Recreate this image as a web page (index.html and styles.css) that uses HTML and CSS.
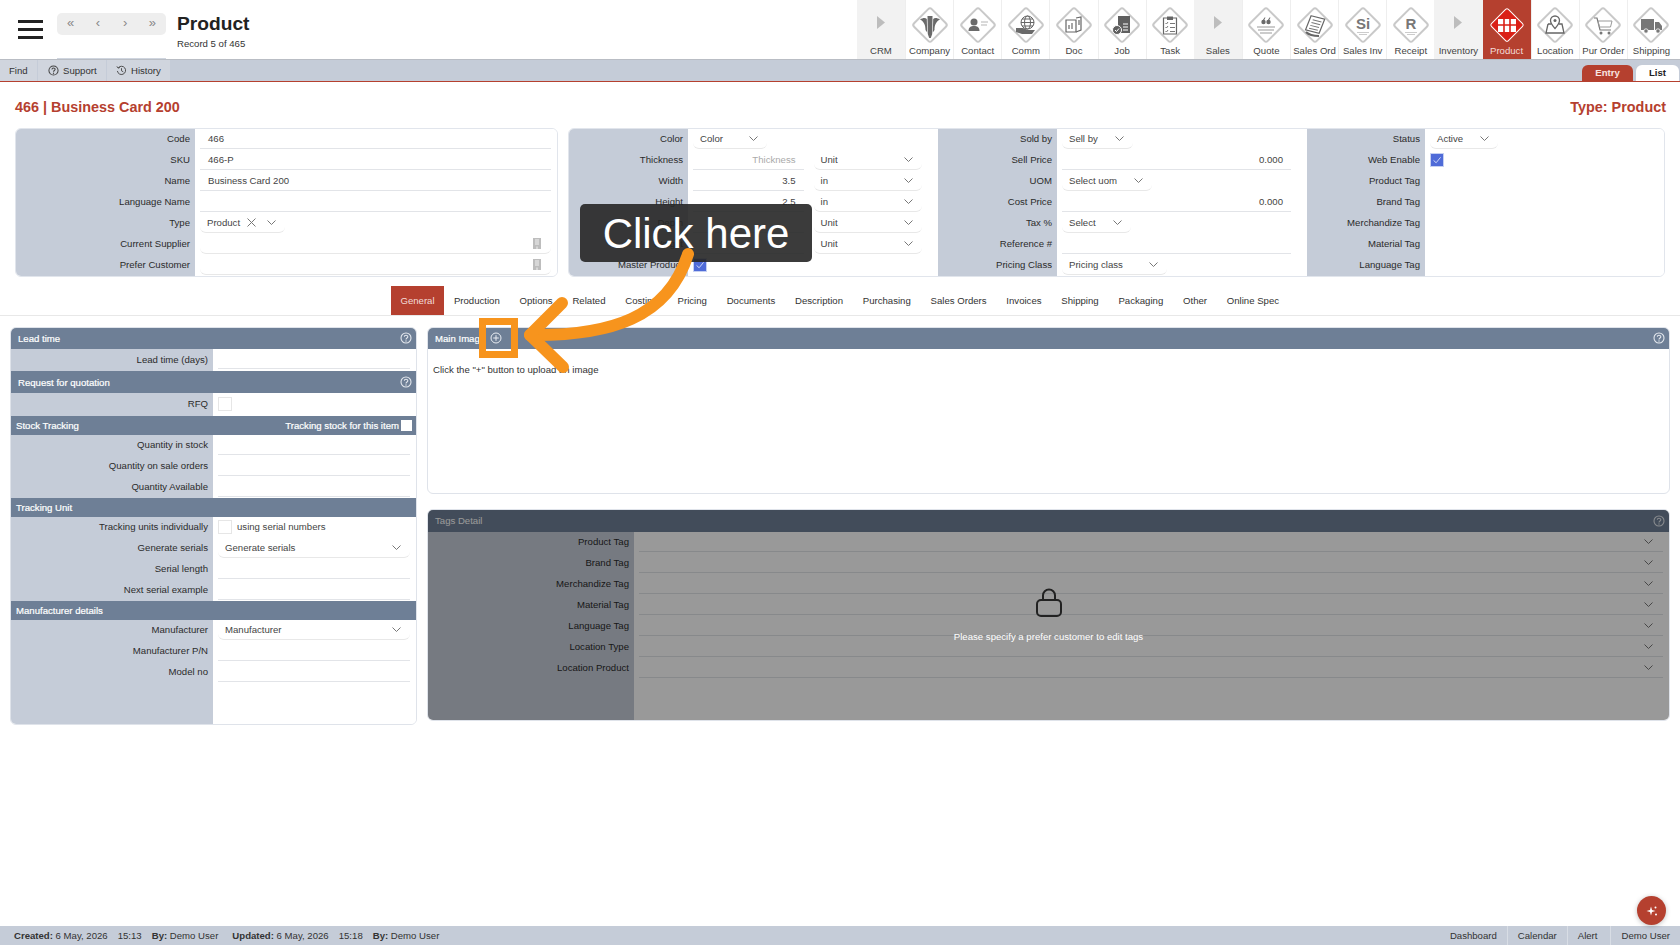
FILE: index.html
```html
<!DOCTYPE html>
<html lang="en">
<head>
  <meta charset="UTF-8">
  <title>Product</title>
  <link rel="stylesheet" href="styles.css">
</head>
<body>
  <!-- shared icons -->
  <svg class="defs" width="0" height="0">
    <symbol id="chev" viewBox="0 0 9 5"><path d="M.5.5 4.5 4.5 8.5.5" fill="none" stroke="#777" stroke-width="1"/></symbol>
    <symbol id="diamond" viewBox="0 0 40 40"><rect x="7.5" y="7.5" width="25" height="25" rx="2.5" transform="rotate(45 20 20)" fill="#fff" stroke="#c9c9c9" stroke-width="2"/></symbol>
    <symbol id="help" viewBox="0 0 12 12"><circle cx="6" cy="6" r="5" fill="none" stroke="currentColor" stroke-width="1.1"/><path d="M4.3 4.8C4.3 2.7 7.8 2.8 7.8 4.7 7.8 6 6 6 6 7.4" fill="none" stroke="currentColor" stroke-width="1.1"/><circle cx="6" cy="9" r=".7" fill="currentColor"/></symbol>
    <symbol id="tick" viewBox="0 0 14 14"><path d="M3 7.5 6 10.2 11.2 3.8" fill="none" stroke="#dfe6fb" stroke-width="1"/></symbol>
    <symbol id="lookup" viewBox="0 0 8 11"><path d="M0 0H8V11H0Z" fill="#bdbdbd"/><path d="M2 2H6M2 4H6M2 6H6M4 8.5V11" stroke="#fff" stroke-width=".8"/></symbol>
  </svg>

  <div class="page">
    <header class="top">
      <button class="burger"><i></i><i></i><i></i></button>
      <div class="nav-wrap">
        <div class="nav-pill"><span>«</span><span>‹</span><span>›</span><span>»</span></div>
      </div>
      <div class="page-title">
        <h1>Product</h1>
        <p>Record 5 of 465</p>
      </div>

      <nav class="tiles">
        <a class="tile group"><svg class="tri" viewBox="0 0 8 13"><path d="M0 0 8 6.5 0 13Z"/></svg><span>CRM</span></a>
        <a class="tile">
          <svg viewBox="0 0 40 40"><use href="#diamond"/><g fill="#6a6a6a"><path d="M17.5 11H22.5L22.2 29 20.8 33H19.2L17.8 29Z"/><path d="M10 14.5C13 12.5 15.5 12.5 16.8 14L17.2 27.5 15.5 25C15.5 20 14 16.5 10 14.5Z"/><path d="M30 14.5C27 12.5 24.5 12.5 23.2 14L22.8 27.5 24.5 25C24.5 20 26 16.5 30 14.5Z"/></g></svg>
          <span>Company</span>
        </a>
        <a class="tile">
          <svg viewBox="0 0 40 40"><use href="#diamond"/><g fill="#6a6a6a"><circle cx="16" cy="17" r="3.5"/><path d="M10.5 26C10.5 22 13 21 16 21S21.5 22 21.5 26Z"/></g><path d="M23 17H30M23 20H29" stroke="#b5b5b5"/></svg>
          <span>Contact</span>
        </a>
        <a class="tile">
          <svg viewBox="0 0 40 40"><use href="#diamond"/><g fill="none" stroke="#666"><circle cx="21.5" cy="17.5" r="6.5" fill="#fff"/><ellipse cx="21.5" cy="17.5" rx="3" ry="6.5"/><path d="M15 17.5H28M16 14H27M16 21H27"/></g><path d="M10 23H17L22 25H29L26 29H16L10 27Z" fill="#6a6a6a"/></svg>
          <span>Comm</span>
        </a>
        <a class="tile">
          <svg viewBox="0 0 40 40"><use href="#diamond"/><g fill="none" stroke="#666" stroke-width="1.2"><path d="M12 15H22V27H12Z"/><path d="M22 13 27 12V25L22 27"/></g><path d="M15 24V20M18 24V18M25 15V20" stroke="#888" stroke-width="1.5"/></svg>
          <span>Doc</span>
        </a>
        <a class="tile">
          <svg viewBox="0 0 40 40"><use href="#diamond"/><path d="M16 11H28V28H16Z" fill="#5f5f5f"/><path d="M21 19H26M21 22H26M21 25H26" stroke="#fff"/><circle cx="15" cy="25" r="4.5" fill="#5f5f5f" stroke="#fff"/><path d="M13 25 14.5 26.5 17 23.5" fill="none" stroke="#fff"/></svg>
          <span>Job</span>
        </a>
        <a class="tile">
          <svg viewBox="0 0 40 40"><use href="#diamond"/><path d="M13.5 13H26.5V29H13.5Z" fill="none" stroke="#666" stroke-width="1.2"/><path d="M17 11.5H23V15H17Z" fill="#666"/><path d="M15.5 18 16.5 19 18 17M15.5 22 16.5 23 18 21M15.5 26 16.5 27 18 25M20 18.5H25M20 22.5H25M20 26.5H25" fill="none" stroke="#777"/></svg>
          <span>Task</span>
        </a>
        <a class="tile group"><svg class="tri" viewBox="0 0 8 13"><path d="M0 0 8 6.5 0 13Z"/></svg><span>Sales</span></a>
        <a class="tile">
          <svg viewBox="0 0 40 40"><use href="#diamond"/><g fill="#6a6a6a"><circle cx="17.5" cy="17" r="2.2"/><circle cx="22.5" cy="17" r="2.2"/><path d="M16 16.5 18.5 12.5H19.5L17.5 16.5ZM21 16.5 23.5 12.5H24.5L22.5 16.5Z"/></g><path d="M11 22H29M12 25H28M14 28H26" stroke="#999"/></svg>
          <span>Quote</span>
        </a>
        <a class="tile">
          <svg viewBox="0 0 40 40"><use href="#diamond"/><g transform="rotate(14 20 20)"><path d="M14 12H28L26 27H12Z" fill="#fff" stroke="#666" stroke-width="1.2"/><path d="M16.5 15.5H25.5M16 18.5H25M15.5 21.5H24.5M15 24.5H24" stroke="#777"/></g><path d="M11 27C14 30 20 31 24 31" fill="none" stroke="#666" stroke-width="2"/></svg>
          <span>Sales Ord</span>
        </a>
        <a class="tile">
          <svg viewBox="0 0 40 40"><use href="#diamond"/><text class="glyph" x="20" y="24" text-anchor="middle">Si</text><path d="M14 27.5H26M16 29.5H24" stroke="#ccc"/></svg>
          <span>Sales Inv</span>
        </a>
        <a class="tile">
          <svg viewBox="0 0 40 40"><use href="#diamond"/><text class="glyph" x="20" y="24" text-anchor="middle">R</text><path d="M14 27.5H26M16 29.5H24" stroke="#ccc"/></svg>
          <span>Receipt</span>
        </a>
        <a class="tile group"><svg class="tri" viewBox="0 0 8 13"><path d="M0 0 8 6.5 0 13Z"/></svg><span>Inventory</span></a>
        <a class="tile active">
          <svg viewBox="0 0 40 40"><rect x="8" y="8" width="24" height="24" rx="2" transform="rotate(45 20 20)" fill="#da2016" stroke="#fff" stroke-width="1"/><path d="M11 14H29V27H11Z" fill="#fff"/><path d="M11 20H29M17 14V27M23 14V27" stroke="#da2016" stroke-width="1.6"/></svg>
          <span>Product</span>
        </a>
        <a class="tile">
          <svg viewBox="0 0 40 40"><use href="#diamond"/><path d="M13 19H16M24 19H27L29 28H11L13 19" fill="none" stroke="#666" stroke-width="1.3"/><path d="M20 11A4.5 4.5 0 0 1 24.5 15.5C24.5 18.5 20 23.5 20 23.5S15.5 18.5 15.5 15.5A4.5 4.5 0 0 1 20 11Z" fill="#fff" stroke="#666" stroke-width="1.3"/><circle cx="20" cy="15.5" r="1.5" fill="#666"/></svg>
          <span>Location</span>
        </a>
        <a class="tile">
          <svg viewBox="0 0 40 40"><use href="#diamond"/><path d="M11 13H14L17 25H28" fill="none" stroke="#777" stroke-width="1.2"/><path d="M15 16H29L27.5 22H16.5Z" fill="none" stroke="#999"/><circle cx="18" cy="28" r="1.5" fill="#777"/><circle cx="26" cy="28" r="1.5" fill="#777"/></svg>
          <span>Pur Order</span>
        </a>
        <a class="tile">
          <svg viewBox="0 0 40 40"><use href="#diamond"/><path d="M10 14H23V25H10ZM24 17H28L31 21V25H24Z" fill="#777"/><circle cx="15" cy="26" r="2.2" fill="#777" stroke="#fff" stroke-width=".8"/><circle cx="27" cy="26" r="2.2" fill="#777" stroke="#fff" stroke-width=".8"/></svg>
          <span>Shipping</span>
        </a>
      </nav>
    </header>

    <div class="bar">
      <a class="bar-item find">Find</a>
      <a class="bar-item support"><svg class="ico" viewBox="0 0 12 12"><use href="#help"/></svg>Support</a>
      <a class="bar-item history">
        <svg class="ico" viewBox="0 0 12 12"><path d="M2.5 3A4.5 4.5 0 1 1 1.5 6.5M1 1.5 2.3 3.4 4.3 2.7M6 3.5V6.3L8 7.5" fill="none" stroke="currentColor"/></svg>History
      </a>
      <div class="view-tabs">
        <a class="view-tab on">Entry</a>
        <a class="view-tab">List</a>
      </div>
    </div>

    <div class="head-row">
      <h2>466 | Business Card 200</h2>
      <h2>Type: Product</h2>
    </div>

    <!-- top forms -->
    <div class="forms">
      <section class="box box-main">
        <div class="col col-main">
          <div class="row"><label>Code</label><div class="fld"><div class="inp">466</div></div></div>
          <div class="row"><label>SKU</label><div class="fld"><div class="inp">466-P</div></div></div>
          <div class="row"><label>Name</label><div class="fld"><div class="inp">Business Card 200</div></div></div>
          <div class="row"><label>Language Name</label><div class="fld"><div class="inp"></div></div></div>
          <div class="row"><label>Type</label><div class="fld"><div class="sel w-type">Product<svg class="x" viewBox="0 0 9 9"><path d="M.5.5 8.5 8.5M8.5.5.5 8.5" stroke="#777"/></svg><svg class="chev"><use href="#chev"/></svg></div></div></div>
          <div class="row"><label>Current Supplier</label><div class="fld"><div class="sel grow">&nbsp;<svg class="lookup"><use href="#lookup"/></svg></div></div></div>
          <div class="row"><label>Prefer Customer</label><div class="fld"><div class="sel grow">&nbsp;<svg class="lookup"><use href="#lookup"/></svg></div></div></div>
        </div>
      </section>

      <section class="box box-attrs">
        <div class="col col-a">
          <div class="row"><label>Color</label><div class="fld"><div class="sel w-color">Color<svg class="chev"><use href="#chev"/></svg></div></div></div>
          <div class="row"><label>Thickness</label><div class="fld split"><div class="inp num ph">Thickness</div><div class="sel">Unit<svg class="chev"><use href="#chev"/></svg></div></div></div>
          <div class="row"><label>Width</label><div class="fld split"><div class="inp num">3.5</div><div class="sel">in<svg class="chev"><use href="#chev"/></svg></div></div></div>
          <div class="row"><label>Height</label><div class="fld split"><div class="inp num">2.5</div><div class="sel">in<svg class="chev"><use href="#chev"/></svg></div></div></div>
          <div class="row"><label>Depth</label><div class="fld split"><div class="inp num"></div><div class="sel">Unit<svg class="chev"><use href="#chev"/></svg></div></div></div>
          <div class="row"><label>Weight</label><div class="fld split"><div class="inp num"></div><div class="sel">Unit<svg class="chev"><use href="#chev"/></svg></div></div></div>
          <div class="row"><label>Master Product</label><div class="fld"><span class="check on"><svg><use href="#tick"/></svg></span></div></div>
        </div>
        <div class="col col-b">
          <div class="row"><label>Sold by</label><div class="fld"><div class="sel w-sold">Sell by<svg class="chev"><use href="#chev"/></svg></div></div></div>
          <div class="row"><label>Sell Price</label><div class="fld"><div class="inp num">0.000</div></div></div>
          <div class="row"><label>UOM</label><div class="fld"><div class="sel w-uom">Select uom<svg class="chev"><use href="#chev"/></svg></div></div></div>
          <div class="row"><label>Cost Price</label><div class="fld"><div class="inp num">0.000</div></div></div>
          <div class="row"><label>Tax %</label><div class="fld"><div class="sel w-tax">Select<svg class="chev"><use href="#chev"/></svg></div></div></div>
          <div class="row"><label>Reference #</label><div class="fld"><div class="inp"></div></div></div>
          <div class="row"><label>Pricing Class</label><div class="fld"><div class="sel w-class">Pricing class<svg class="chev"><use href="#chev"/></svg></div></div></div>
        </div>
        <div class="col col-c">
          <div class="row"><label>Status</label><div class="fld"><div class="sel w-status">Active<svg class="chev"><use href="#chev"/></svg></div></div></div>
          <div class="row"><label>Web Enable</label><div class="fld"><span class="check on"><svg><use href="#tick"/></svg></span></div></div>
          <div class="row"><label>Product Tag</label><div class="fld"></div></div>
          <div class="row"><label>Brand Tag</label><div class="fld"></div></div>
          <div class="row"><label>Merchandize Tag</label><div class="fld"></div></div>
          <div class="row"><label>Material Tag</label><div class="fld"></div></div>
          <div class="row"><label>Language Tag</label><div class="fld"></div></div>
        </div>
      </section>
    </div>

    <!-- tabs -->
    <nav class="tabs">
      <a class="tab on">General</a>
      <a class="tab">Production</a>
      <a class="tab">Options</a>
      <a class="tab">Related</a>
      <a class="tab">Costing</a>
      <a class="tab">Pricing</a>
      <a class="tab">Documents</a>
      <a class="tab">Description</a>
      <a class="tab">Purchasing</a>
      <a class="tab">Sales Orders</a>
      <a class="tab">Invoices</a>
      <a class="tab">Shipping</a>
      <a class="tab">Packaging</a>
      <a class="tab">Other</a>
      <a class="tab">Online Spec</a>
    </nav>

    <main class="panels">
      <section class="panel side">
        <div class="sec">Lead time<svg class="help"><use href="#help"/></svg></div>
        <div class="row tall"><label>Lead time (days)</label><div class="fld"><div class="inp"></div></div></div>
        <div class="sec sec-22">Request for quotation<svg class="help"><use href="#help"/></svg></div>
        <div class="row taller"><label>RFQ</label><div class="fld"><span class="check"></span></div></div>

        <div class="sec sub">Stock Tracking<span class="sec-right">Tracking stock for this item<i class="mini-check"></i></span></div>
        <div class="row"><label>Quantity in stock</label><div class="fld"><div class="inp"></div></div></div>
        <div class="row"><label>Quantity on sale orders</label><div class="fld"><div class="inp"></div></div></div>
        <div class="row"><label>Quantity Available</label><div class="fld"><div class="inp"></div></div></div>

        <div class="sec sub">Tracking Unit</div>
        <div class="row"><label>Tracking units individually</label><div class="fld"><span class="check"></span><span class="check-text">using serial numbers</span></div></div>
        <div class="row"><label>Generate serials</label><div class="fld"><div class="sel grow">Generate serials<svg class="chev"><use href="#chev"/></svg></div></div></div>
        <div class="row"><label>Serial length</label><div class="fld"><div class="inp"></div></div></div>
        <div class="row"><label>Next serial example</label><div class="fld"><div class="inp"></div></div></div>

        <div class="sec sub">Manufacturer details</div>
        <div class="row"><label>Manufacturer</label><div class="fld"><div class="sel grow">Manufacturer<svg class="chev"><use href="#chev"/></svg></div></div></div>
        <div class="row"><label>Manufacturer P/N</label><div class="fld"><div class="inp"></div></div></div>
        <div class="row"><label>Model no</label><div class="fld"><div class="inp"></div></div></div>
        <div class="row filler"><label></label><div class="fld"></div></div>
      </section>

      <div class="main-col">
        <section class="panel image-panel">
          <div class="sec">Main Image<svg class="plus" viewBox="0 0 12 12"><circle cx="6" cy="6" r="5" fill="none" stroke="#e8ecf2"/><path d="M6 3.2V8.8M3.2 6H8.8" stroke="#e8ecf2"/></svg><svg class="help"><use href="#help"/></svg></div>
          <p class="hint">Click the "+" button to upload an image</p>
        </section>

        <section class="panel tags-panel">
          <div class="sec">Tags Detail<svg class="help"><use href="#help"/></svg></div>
          <div class="row"><label>Product Tag</label><div class="fld"><div class="inp sel-line"><svg class="chev"><use href="#chev"/></svg></div></div></div>
          <div class="row"><label>Brand Tag</label><div class="fld"><div class="inp sel-line"><svg class="chev"><use href="#chev"/></svg></div></div></div>
          <div class="row"><label>Merchandize Tag</label><div class="fld"><div class="inp sel-line"><svg class="chev"><use href="#chev"/></svg></div></div></div>
          <div class="row"><label>Material Tag</label><div class="fld"><div class="inp sel-line"><svg class="chev"><use href="#chev"/></svg></div></div></div>
          <div class="row"><label>Language Tag</label><div class="fld"><div class="inp sel-line"><svg class="chev"><use href="#chev"/></svg></div></div></div>
          <div class="row"><label>Location Type</label><div class="fld"><div class="inp sel-line"><svg class="chev"><use href="#chev"/></svg></div></div></div>
          <div class="row"><label>Location Product</label><div class="fld"><div class="inp sel-line"><svg class="chev"><use href="#chev"/></svg></div></div></div>
          <div class="row filler"><label></label><div class="fld"></div></div>

          <div class="lock-layer">
            <svg class="lock" viewBox="0 0 26 29"><path d="M7 13V7.5A6 6 0 0 1 19 7.5V13" fill="none" stroke="#222" stroke-width="2"/><rect x="1" y="12" width="24" height="16" rx="4" fill="none" stroke="#222" stroke-width="2"/></svg>
            <p>Please specify a prefer customer to edit tags</p>
          </div>
        </section>
      </div>
    </main>

    <footer class="foot">
      <div class="meta">
        <span><b>Created:</b> 6 May, 2026</span><span>15:13</span><span class="end"><b>By:</b> Demo User</span>
        <span><b>Updated:</b> 6 May, 2026</span><span>15:18</span><span><b>By:</b> Demo User</span>
      </div>
      <div class="foot-links">
        <a>Dashboard</a><a>Calendar</a><a>Alert</a><a>Demo User</a>
      </div>
    </footer>
  </div>

  <button class="fab"><svg viewBox="0 0 14 14"><path d="M6 2.5 7 6 10.5 7 7 8 6 11.5 5 8 1.5 7 5 6Z" fill="#fff"/><circle cx="10.5" cy="3.5" r="1" fill="#fff"/><circle cx="11" cy="10.5" r="1" fill="#fff"/></svg></button>

  <!-- tutorial callout over the page -->
  <div class="callout">Click here</div>
  <svg class="annot" viewBox="0 0 1680 945">
    <rect x="482.5" y="321.5" width="32" height="33"/>
    <path d="M688 254C668 318 610 336 530 335"/>
    <path d="M562 303 530 335 563 367"/>
  </svg>
</body>
</html>
```

FILE: styles.css
```css
/* base */
* { margin: 0; padding: 0; box-sizing: border-box; }
html, body { height: 100%; overflow: hidden; }
body { font: 9.6px/1.2 "Liberation Sans", Arial, sans-serif; color: #333; background: #fff; position: relative; }
.defs { position: absolute; }
.page { height: 945px; display: flex; flex-direction: column; }
a { color: inherit; }
button { border: none; background: none; }

/* top header */
.top { height: 60px; display: flex; align-items: flex-start; border-bottom: 1px solid #b9bdc4; }
.burger { width: 25px; margin: 20px 0 0 18px; display: flex; flex-direction: column; gap: 5.5px; }
.burger i { display: block; height: 2.5px; background: #222; }
.nav-wrap { width: 109px; height: 46px; margin: 13px 0 0 14px; border-bottom: 1.5px solid #cfd5df; }
.nav-pill { height: 22px; background: #eee; border-radius: 5px; display: flex; }
.nav-pill span { width: 27.25px; text-align: center; line-height: 20px; font-size: 13px; color: #888; }
.page-title { margin: 12px 0 0 11px; }
.page-title h1 { font-size: 19.2px; line-height: 23px; color: #222; }
.page-title p { margin-top: 3px; line-height: 12px; color: #333; }

/* module tiles */
.tiles { margin-left: auto; margin-right: 5px; display: flex; height: 59px; }
.tile { width: 48.125px; height: 59px; border-left: 1px solid #eee; text-align: center; color: #444; padding-top: 5px; display: block; }
.tile svg { display: block; width: 40px; height: 40px; margin: 0 auto; }
.tile span { display: block; line-height: 11px; white-space: nowrap; }
.tile.group { background: #f2f2f2; border-left: none; }
.tile.group .tri { width: 8px; height: 13px; margin: 11px auto 16px; fill: #bdbdbd; }
.tile.active { background: #b5402f; color: #f3dcd8; border-left: none; }
.glyph { font-size: 15px; font-weight: 700; fill: #777; }

/* toolbar under header */
.bar { height: 22px; background: #c5ccd8; border-bottom: 1.5px solid #b5402f; display: flex; color: #333; }
.bar-item { display: flex; align-items: center; gap: 4px; height: 21px; background: #d0d5de; border-right: 1px solid #c5ccd8; }
.find { width: 38px; padding-left: 9px; }
.support { width: 69px; padding-left: 10px; }
.history { width: 64px; padding-left: 9px; }
.ico { width: 11px; height: 11px; color: #444; }
.view-tabs { margin-left: auto; margin-right: 1px; display: flex; gap: 3px; align-items: flex-end; height: 20.5px; }
.view-tab { height: 16px; border-radius: 6px 6px 0 0; background: #fff; width: 43px; text-align: center; line-height: 16px; font-weight: 700; color: #222; }
.view-tab.on { width: 51px; background: #b5402f; color: #f8e4e0; }

/* record title */
.head-row { display: flex; justify-content: space-between; padding: 16px 14px 12px 15px; }
.head-row h2 { font-size: 14.4px; line-height: 18px; color: #b5402f; }

/* top forms */
.forms { display: flex; gap: 10px; padding: 0 15px; }
.box { border: 1px solid #e1e5ec; border-radius: 6px; overflow: hidden; display: flex; height: 149px; background: #fff; }
.box-main { width: 543px; }
.box-attrs { flex: 1; }
.col { display: flex; flex-direction: column; }
.col-main { width: 100%; --label: 179px; }
.col-a { width: 369px; --label: 119px; }
.col-b { width: 369px; --label: 119px; }
.col-b .fld { padding-right: 16px; }
.col-c { flex: 1; --label: 118px; }

/* label + field row */
.row { display: grid; grid-template-columns: var(--label) 1fr; height: 21px; }
.row label { background: #c5ccd8; text-align: right; padding-right: 5px; line-height: 20px; color: #2b2b2b; white-space: nowrap; }
.fld { display: flex; align-items: flex-start; padding: 0 6px 0 5px; min-width: 0; background: #fff; }
.split { gap: 10px; padding-right: 16px; }
.split > * { flex: 1; }
.inp { flex: 1; height: 20px; border-bottom: 1px solid #e2e4e8; padding: 0 8px; line-height: 19px; color: #444; }
.num { text-align: right; }
.ph { color: #aaa; }
.sel { height: 20px; border-bottom: 1px solid #e8e8e8; border-radius: 0 0 6px 6px; padding: 0 7px; line-height: 19px; color: #444; display: flex; align-items: center; position: relative; }
.grow { flex: 1; }
.chev { width: 9px; height: 5px; margin-left: auto; margin-right: 2px; flex: none; }
.x { width: 9px; height: 9px; margin-left: 7px; flex: none; }
.lookup { width: 8px; height: 11px; margin-left: auto; margin-right: 3px; }
.w-type { width: 85px; }
.w-color { width: 74px; }
.w-sold { width: 71px; }
.w-uom { width: 90px; }
.w-tax { width: 69px; }
.w-class { width: 105px; }
.w-status { width: 68px; }
.check { width: 14px; height: 14px; margin-top: 3px; border: 1px solid #e6e6e6; display: block; flex: none; background: #fff; }
.check.on { background: #4f6bd8; border-color: #c5d0f2; }
.check svg { display: block; width: 12px; height: 12px; }
.check-text { margin-left: 5px; line-height: 19px; color: #444; }

/* tabs */
.tabs { display: flex; height: 30px; margin-top: 9px; padding-left: 391px; border-bottom: 1px solid #e8e8e8; }
.tab { padding: 0 9.9px; line-height: 29px; color: #333; white-space: nowrap; }
.tab.on { background: #b5402f; color: #f3dcd8; width: 53px; padding: 0; text-align: center; }

/* panels */
.panels { display: flex; gap: 10px; padding: 11px 10px 0; align-items: flex-start; }
.panel { border: 1px solid #dfe3ea; border-radius: 6px; overflow: hidden; background: #fff; display: flex; flex-direction: column; position: relative; }
.side { width: 407px; height: 398px; --label: 202px; }
.main-col { flex: 1; display: flex; flex-direction: column; gap: 15px; }
.sec { height: 21px; flex: none; background: #6e7f96; color: #fff; -webkit-text-stroke: .2px #fff; line-height: 21px; padding: 0 0 1px 7px; display: flex; align-items: center; }
.sec.sub { height: 19px; padding: 0 0 0 5px; }
.sec.sec-22 { height: 22px; padding-bottom: 0; }
.sec-right { margin-left: auto; margin-right: 4px; display: flex; align-items: center; gap: 2px; }
.mini-check { width: 11px; height: 11px; background: #fff; display: block; }
.help { width: 12px; height: 12px; margin-left: auto; margin-right: 4px; color: #e4e8ee; }
.plus { width: 12px; height: 12px; margin-left: 5px; }
.tall { height: 22px; }
.taller { height: 23px; }
.taller .check { margin-top: 4px; }
.row.tall label, .row.taller label { line-height: 22px; }
.filler { flex: 1; height: auto; }
.image-panel { height: 167px; }
.hint { padding: 15px 5px; color: #333; }
.tags-panel { height: 212px; --label: 206px; }
.tags-panel .sec { height: 22px; -webkit-text-stroke: 0; }
.sel-line { display: flex; align-items: center; padding-right: 8px; }

/* dim layer on the tags panel */
.lock-layer { position: absolute; inset: 0; background: rgba(0, 0, 0, .4); display: flex; flex-direction: column; align-items: center; justify-content: center; gap: 14px; padding-top: 1px; }
.lock { width: 26px; height: 29px; }
.lock-layer p { color: #fff; line-height: 12px; }

/* footer */
.foot { margin-top: auto; height: 19px; background: #c5ccd8; display: flex; align-items: center; padding-left: 14px; color: #333; }
.meta { display: flex; gap: 10px; }
.meta .end { margin-right: 4px; }
.foot-links { margin-left: auto; display: flex; height: 100%; padding-right: 10px; }
.foot-links a { line-height: 19px; padding: 0 10px; border-left: 1px solid #d8dde5; }
.foot-links a:first-child { border-left: none; }
.foot-links a:nth-child(3) { padding-right: 13px; }
.foot-links a:last-child { padding-right: 0; }

/* floating button */
.fab { position: absolute; left: 1637px; top: 896px; width: 29px; height: 29px; border-radius: 50%; background: #b5402f; box-shadow: 0 1px 5px rgba(0, 0, 0, .25); display: flex; align-items: center; justify-content: center; }
.fab svg { width: 14px; height: 14px; }

/* tutorial annotation */
.callout { position: absolute; left: 580px; top: 204px; width: 232px; height: 58px; border-radius: 5px; background: rgba(38, 38, 38, .9); color: #fff; font-size: 42px; line-height: 60px; text-align: center; }
.annot { position: absolute; left: 0; top: 0; width: 1680px; height: 945px; pointer-events: none; }
.annot rect { fill: none; stroke: #f7941d; stroke-width: 7; }
.annot path { fill: none; stroke: #f7941d; stroke-width: 12; stroke-linecap: round; stroke-linejoin: round; }
```
